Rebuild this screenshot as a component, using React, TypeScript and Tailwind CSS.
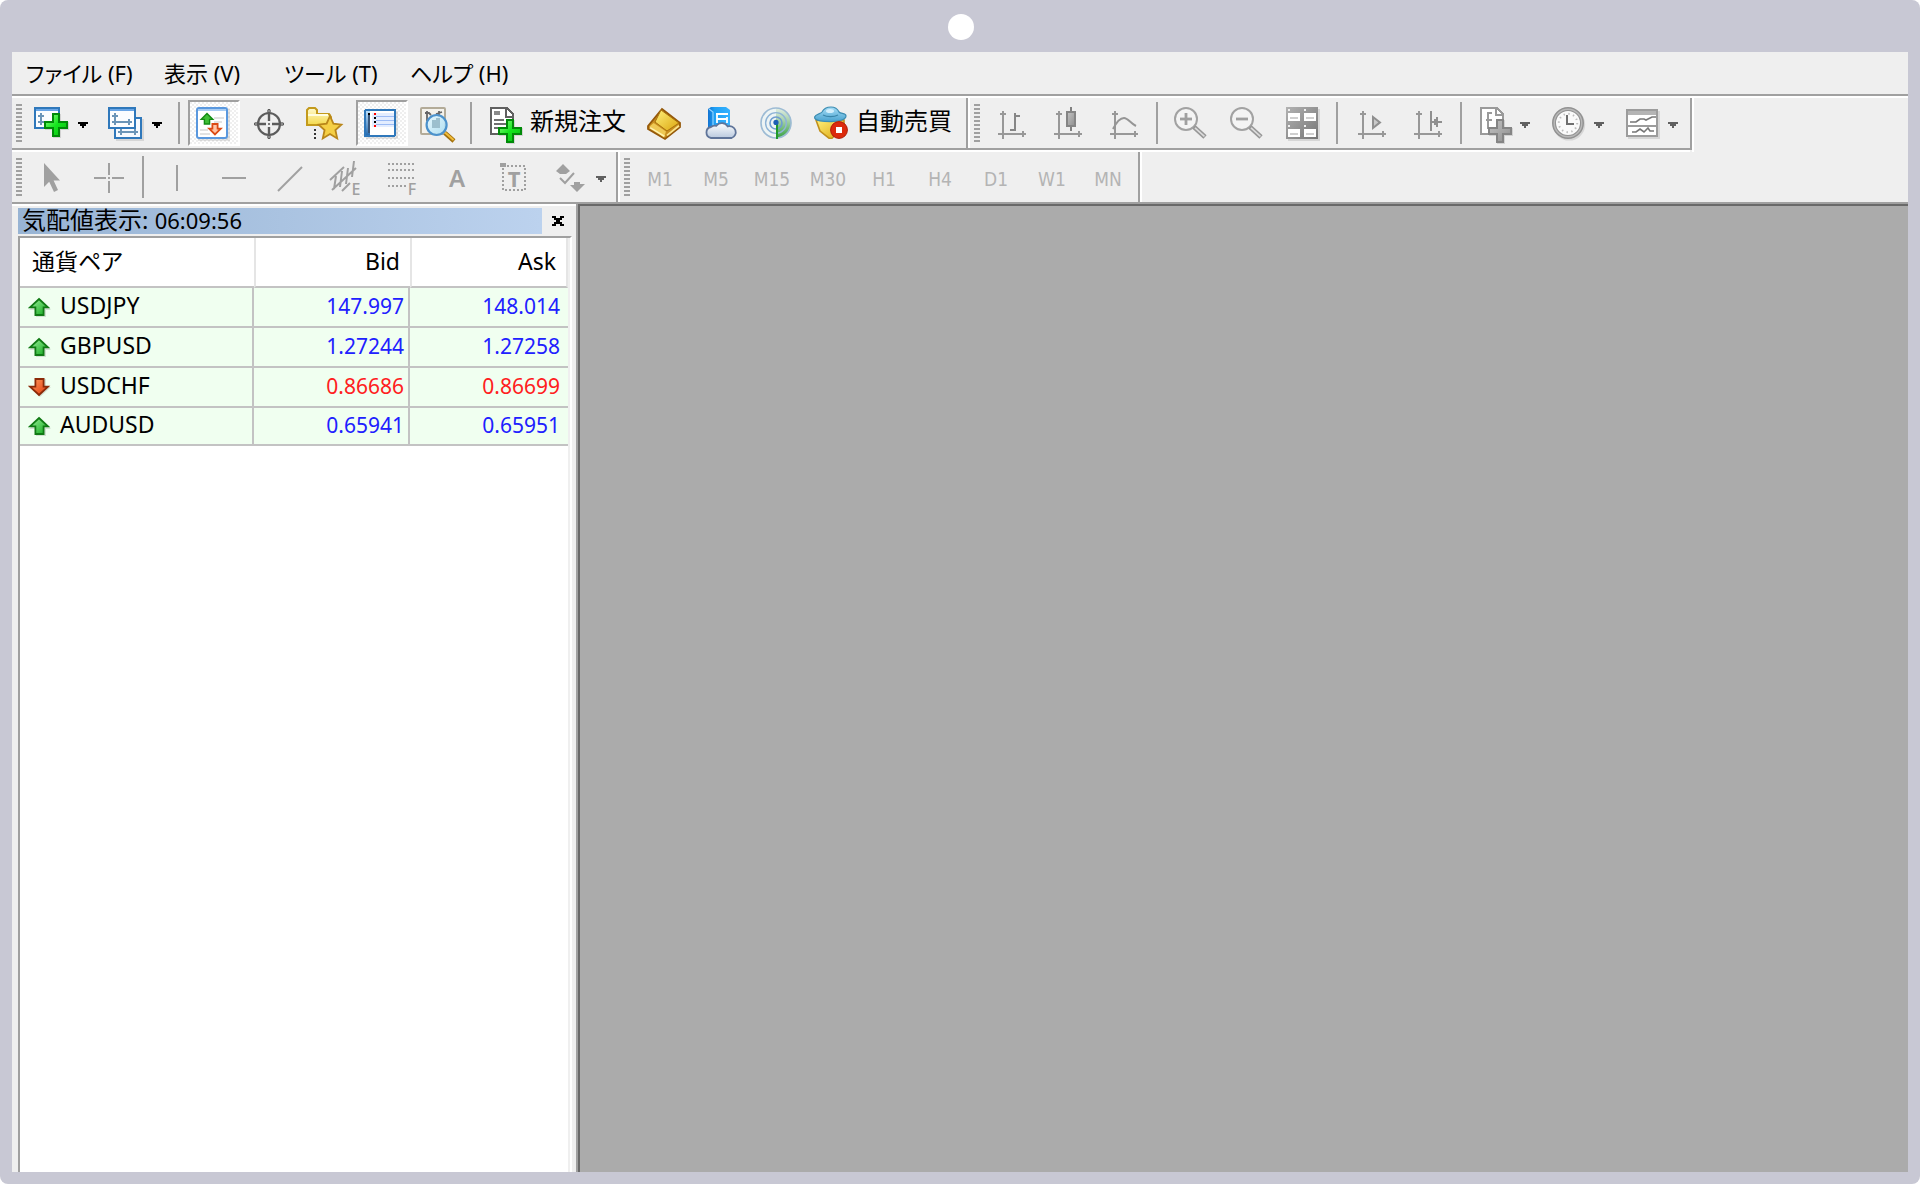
import React from 'react'
import { clsx } from 'clsx'

interface IconProps {
  children: React.ReactNode
  crisp?: boolean
}

// All toolbar glyphs share an 18x18 grid shown at double size
const Icon: React.FC<IconProps> = ({ children, crisp = true }) => (
  <svg
    viewBox="0 0 18 18"
    className="w-9 h-9 shrink-0 overflow-visible"
    shapeRendering={crisp ? 'crispEdges' : 'auto'}
    fill="none"
    aria-hidden="true"
  >
    {children}
  </svg>
)

const Gradients = () => (
  <svg className="absolute w-0 h-0" aria-hidden="true">
    <defs>
      <linearGradient id="plusGreen" x1="0" y1="0" x2="1" y2="1">
        <stop offset="0" stopColor="#9dff8c" />
        <stop offset="0.5" stopColor="#14e61e" />
        <stop offset="1" stopColor="#08b80e" />
      </linearGradient>
      <linearGradient id="plusGrey" x1="0" y1="0" x2="1" y2="1">
        <stop offset="0" stopColor="#c4c4c4" />
        <stop offset="1" stopColor="#8e8e8e" />
      </linearGradient>
      <linearGradient id="strip" x1="0" y1="0" x2="0" y2="1">
        <stop offset="0" stopColor="#b9dcf8" />
        <stop offset="1" stopColor="#2a6db0" />
      </linearGradient>
      <linearGradient id="gold" x1="0" y1="0" x2="1" y2="1">
        <stop offset="0" stopColor="#fff07a" />
        <stop offset="1" stopColor="#dba50e" />
      </linearGradient>
      <linearGradient id="folder" x1="0" y1="0" x2="0" y2="1">
        <stop offset="0" stopColor="#fffbd0" />
        <stop offset="1" stopColor="#f4d94c" />
      </linearGradient>
      <linearGradient id="lens" x1="0" y1="0" x2="1" y2="1">
        <stop offset="0" stopColor="#e6f8ff" />
        <stop offset="1" stopColor="#a6dcf2" />
      </linearGradient>
      <linearGradient id="page" x1="0" y1="0" x2="1" y2="0">
        <stop offset="0" stopColor="#1273d2" />
        <stop offset="0.3" stopColor="#1fa0f4" />
        <stop offset="1" stopColor="#37b2ff" />
      </linearGradient>
      <linearGradient id="cloud" x1="0" y1="0" x2="0" y2="1">
        <stop offset="0" stopColor="#ffffff" />
        <stop offset="1" stopColor="#b9c9de" />
      </linearGradient>
      <linearGradient id="radar" x1="0" y1="0" x2="0" y2="1">
        <stop offset="0" stopColor="#e2eee4" />
        <stop offset="0.4" stopColor="#a9d2ae" />
        <stop offset="1" stopColor="#36a23f" />
      </linearGradient>
      <linearGradient id="hat" x1="0" y1="0" x2="0" y2="1">
        <stop offset="0" stopColor="#a4dcf6" />
        <stop offset="1" stopColor="#4aa3cf" />
      </linearGradient>
      <linearGradient id="greyTile" x1="0" y1="0" x2="1" y2="1">
        <stop offset="0" stopColor="#b2b2b2" />
        <stop offset="1" stopColor="#767676" />
      </linearGradient>
      <linearGradient id="upArrow" x1="0" y1="0" x2="1" y2="1">
        <stop offset="0" stopColor="#9df09d" />
        <stop offset="1" stopColor="#0fa81a" />
      </linearGradient>
      <linearGradient id="downArrow" x1="0" y1="0" x2="1" y2="1">
        <stop offset="0" stopColor="#ff9a5e" />
        <stop offset="1" stopColor="#e03a0c" />
      </linearGradient>
    </defs>
  </svg>
)

const Plus: React.FC<{ x: number; y: number; stroke?: string; fill?: string }> = ({
  x,
  y,
  stroke = '#008a08',
  fill = 'url(#plusGreen)',
}) => (
  <>
    <path
      transform={`translate(${x + 0.5} ${y + 0.5})`}
      d="M4 0h4v4h4v4H8v4H4V8H0V4h4z"
      fill="#000"
      opacity="0.12"
    />
    <path
      transform={`translate(${x} ${y})`}
      d="M4.5.5h3v4h4v3h-4v4h-3v-4h-4v-3h4z"
      fill={fill}
      stroke={stroke}
    />
  </>
)

const NewChartIcon = () => (
  <Icon>
    <path d="M.5.5h12v10H.5z" fill="#fbfdff" stroke="#2f78bb" />
    <path d="M1 1h11v1H1z" fill="#6aa6e6" />
    <path d="M3 3h1v6H3zM2 4h3v1H2zM2 7h5v1H2z" fill="#6b95b8" />
    <Plus x={5} y={3} />
  </Icon>
)

const ProfilesIcon = () => (
  <Icon>
    <path d="M4 6h14v11H4z" fill="#000" opacity="0.1" />
    <path d="M3.5 5.5h13v10h-13z" fill="#f6faff" stroke="#2f78bb" />
    <path d="M5 12h10v1H5zM6 11h1v3H6zM13 11h1v3h-1z" fill="#6b95b8" />
    <path d="M.5.5h13v10H.5z" fill="#fbfdff" stroke="#2f78bb" />
    <path d="M1 1h12v1H1z" fill="#6aa6e6" />
    <path d="M3 3h1v6H3zM2 4h3v1H2zM2 7h10v1H2zM10 6h1v3h-1z" fill="#6b95b8" />
  </Icon>
)

const MarketWatchIcon = () => (
  <Icon crisp={false}>
    <path d="M1 1h16v16H1z" fill="#000" opacity="0.1" />
    <rect x="0.5" y="0.5" width="15" height="15" rx="1" fill="#fff" stroke="#5a98de" />
    <path d="M1 1h14v1H1z" fill="#a9cdf3" />
    <path d="M9 5.5h5M9 7.5h4M2 11.5h4M2 13.5h5" stroke="#e2e2e2" />
    <path d="M5.500 3.300l2.900 2.900H6.800v2.300H4.200V6.200H2.600z" fill="#3fbe36" stroke="#138c13" strokeWidth="0.700" />
    <path d="M9.500 13.700l2.900-2.900h-1.600V8.500H8.200v2.300H6.600z" fill="#ffc4a6" stroke="#dc4a14" strokeWidth="0.900" />
  </Icon>
)

const CrosshairIcon = () => (
  <Icon crisp={false}>
    <circle cx="8.500" cy="8.500" r="5.500" stroke="#5c5c5c" strokeWidth="1.100" />
    <path d="M8.500 1v6M8.500 10v6M1 8.500h6M10 8.500h6" stroke="#5c5c5c" strokeWidth="1.200" />
    <path d="M8 8h1v1H8z" fill="#777" />
    <path d="M7.500 2h2M7.500 15h2M2 7.500v2M15 7.500v2" stroke="#8a8a8a" />
  </Icon>
)

const NavigatorIcon = () => (
  <Icon crisp={false}>
    <path
      d="M-.5 1.500L.5.500h3l1 1v2h6l1 1.500v4h-12z"
      fill="url(#folder)"
      stroke="#c39a1c"
    />
    <path d="M0 4h10" stroke="#fffde0" />
    <path d="M3.500 11v6" stroke="#333" strokeDasharray="1 1" shapeRendering="crispEdges" />
    <path
      d="M11 4.500l1.700 3.800 4 .500-3 2.700.900 4.200-3.600-2.200-3.600 2.200.900-4.200-3-2.700 4-.500z"
      fill="#f5cf45"
      stroke="#b9861a"
      strokeWidth="0.900"
    />
  </Icon>
)

const DataWindowIcon = () => (
  <Icon>
    <path d="M1 2h16v14H1z" fill="#000" opacity="0.1" />
    <rect x="0.500" y="1.500" width="15" height="13" rx="0.500" fill="#fff" stroke="#2f78bb" />
    <path d="M1 2h2v12H1z" fill="url(#strip)" />
    <path d="M4 3h11v7H4z" fill="#e3edff" />
    <path d="M6 4.500h9M6 6.500h9M6 8.500h9" stroke="#9dbcf5" strokeWidth="0.500" />
    <path d="M2 3h1v1H2zM5 5h1v1H5zM5 7h1v1H5z" fill="#000" />
    <path d="M2 4h1v9H2z" fill="#37567c" />
    <path d="M5 3h1v1H5zM5 9h1v1H5z" fill="#f00" />
  </Icon>
)

const TesterIcon = () => (
  <Icon crisp={false}>
    <rect x="0.500" y="0.500" width="12" height="13" rx="0.500" fill="#f4f2ec" stroke="#b3ab98" />
    <path d="M3.500 2v5M2.500 3h2l1 1M9.500 2v3M8 3.500l3-1" stroke="#666" strokeWidth="0.900" />
    <circle cx="8.300" cy="9" r="5" fill="url(#lens)" fillOpacity="0.900" stroke="#4c92cc" strokeWidth="1.100" />
    <path d="M6 6.500h2v4H6zM8 5.500h2v5H8z" fill="#9cbfce" />
    <path d="M12.500 13l4.500 4" stroke="#a2700c" strokeWidth="2.200" />
    <path d="M12.500 12.700l4.300 3.800" stroke="#f2bd3a" strokeWidth="1" />
  </Icon>
)

const NewOrderIcon = () => (
  <Icon>
    <path d="M.5.500h8l3 3v10H.5z" fill="#fff" stroke="#606060" />
    <path d="M8 1v4h4" stroke="#606060" />
    <path d="M2 2h3v2H2z" fill="#8a8a8a" />
    <path d="M2 6.500h5M2 8.500h7M2 10.500h3" stroke="#707070" />
    <Plus x={4} y={6} />
  </Icon>
)

const BookIcon = () => (
  <Icon crisp={false}>
    <path d="M7 1l9 7v2L8.500 16 0 11V9.500z" fill="#c98f20" stroke="#95590a" strokeWidth="0.900" />
    <path d="M6.500 1.500L15.500 8 9.500 12 3.500 7.500z" fill="url(#gold)" stroke="#a8700c" strokeWidth="0.500" />
    <path d="M.800 9.800l2-1.800 6.200 4.200-1 3z" fill="#efc955" />
    <path d="M1 10.300l7.200 4.300" stroke="#fff3ae" strokeWidth="0.800" />
    <path d="M9.500 14.200l6-4.800" stroke="#fbe48c" strokeWidth="0.900" />
  </Icon>
)

const CloudIcon = () => (
  <Icon crisp={false}>
    <path d="M2 1l1.500-1H11l2 1.500V10H2z" fill="url(#page)" />
    <path d="M2.500 1l2 1.500V9" stroke="#8fd2ff" strokeWidth="0.600" />
    <path d="M6 3.500h6M6.500 3.500V8M6.500 6h5M11.500 5v3" stroke="#fff" strokeWidth="0.900" />
    <path
      d="M3.500 15.500a2.800 2.800 0 010-5.500 3 3 0 012.700-.600 3.400 3.400 0 015.600.300 2.900 2.900 0 012 5.800z"
      fill="url(#cloud)"
      stroke="#5f7499"
      strokeWidth="0.900"
    />
  </Icon>
)

const SignalsIcon = () => (
  <Icon crisp={false}>
    <circle cx="8" cy="8" r="7.600" fill="#edf4f4" />
    <path d="M8 8V.400A7.600 7.600 0 018 15.600z" fill="url(#radar)" />
    <circle cx="8" cy="8" r="7.500" stroke="#9dbbd4" strokeWidth="0.800" />
    <circle cx="8" cy="8" r="5.200" stroke="#8fb4d6" strokeWidth="0.700" />
    <circle cx="8" cy="8" r="3" stroke="#6f9dd0" strokeWidth="0.800" />
    <path d="M8 8h1v8H8z" fill="#1f9a2b" />
    <circle cx="8" cy="7.700" r="1.300" fill="#1d5fb4" />
  </Icon>
)

const AutoTradingIcon = () => (
  <Icon crisp={false}>
    <path d="M0 6.500h14v3L8 15.600H6.500L2 12z" fill="url(#gold)" stroke="#c1901c" strokeWidth="0.800" />
    <path
      d="M-.700 5c.500-1.500 3-1.500 3.700-2.500C4 .500 5.500 0 7.500 0s3.300 1 4 2.500c1 1 3.500.500 3.500 2 0 2-4 2.800-7.500 2.800S-1 7-.700 5z"
      fill="url(#hat)"
      stroke="#3d8db2"
      strokeWidth="0.600"
    />
    <path d="M3.500 4c2 1.100 5.500 1.100 7.500 0" stroke="#3a86ab" strokeWidth="0.600" />
    <ellipse cx="7" cy="2" rx="2" ry="1" fill="#d2effc" />
    <circle cx="11.500" cy="11.500" r="4.200" fill="#dc2a0c" stroke="#b01c06" strokeWidth="0.500" />
    <path d="M10 10h3v3h-3z" fill="#fff" />
  </Icon>
)

const Axes = () => (
  <path
    d="M5 2h1v14H5zM4 3h3v1H4zM3 13h14v1H3zM15 12h1v3h-1z"
    fill="#989898"
  />
)

const BarChartIcon = () => (
  <Icon>
    <Axes />
    <path d="M11 3h1v9h-1zM12 4h2v1h-2zM9 11h2v1H9z" fill="#868686" />
  </Icon>
)

const CandleIcon = () => (
  <Icon>
    <Axes />
    <path d="M11 0h1v12h-1z" fill="#808080" />
    <path d="M9.500 2.500h4v7h-4z" fill="url(#plusGrey)" stroke="#858585" />
  </Icon>
)

const LineChartIcon = () => (
  <Icon>
    <Axes />
    <path d="M4.500 11C6 8 8 5.500 10 5.500S13 8 16 9.500" stroke="#959595" shapeRendering="auto" />
  </Icon>
)

const ZoomIcon: React.FC<{ zoomIn?: boolean }> = ({ zoomIn }) => (
  <Icon crisp={false}>
    <circle cx="6" cy="6" r="5.500" fill="#f4f4f4" stroke="#a2a2a2" />
    <path d="M3 6h6" stroke="#a0a0a0" strokeWidth="1.400" />
    {zoomIn && <path d="M6 3v6" stroke="#a0a0a0" strokeWidth="1.400" />}
    <path d="M10 10l5.500 5" stroke="#979797" strokeWidth="2.400" />
    <path d="M10.500 10.400l4.700 4.300" stroke="#dcdcdc" strokeWidth="0.800" />
  </Icon>
)

const TileIcon = () => (
  <Icon>
    <path d="M1 1h16v16H1z" fill="#000" opacity="0.1" />
    <path d="M0 0h8v8H0zM8 0h8v8H8zM0 8h8v8H0zM8 8h8v8H8z" fill="url(#greyTile)" />
    <path d="M1 3h6v4H1zM9 3h6v4H9zM1 11h6v4H1zM9 11h6v4H9z" fill="#fff" />
    <path d="M2 5h4v1H2zM10 5h4v1h-4zM2 13h4v1H2zM10 13h4v1h-4z" fill="#cfcfcf" />
    <path d="M1 1h1v1H1zM9 1h1v1H9zM1 9h1v1H1zM9 9h1v1H9z" fill="#f0f0f0" />
  </Icon>
)

const AutoScrollIcon = () => (
  <Icon>
    <Axes />
    <path d="M10.500 5v5.500L14 7.700z" fill="#c9c9c9" stroke="#8f8f8f" shapeRendering="auto" />
  </Icon>
)

const ChartShiftIcon = () => (
  <Icon>
    <Axes />
    <path d="M11 2h1v10h-1zM12 7h5v1h-5zM13 6h1v3h-1zM14 5h1v5h-1z" fill="#8f8f8f" />
  </Icon>
)

const IndicatorsIcon = () => (
  <Icon>
    <path d="M2.500.500h8l3 3v10h-11z" fill="#fff" stroke="#9a9a9a" />
    <path d="M10 1v3h3" stroke="#9a9a9a" />
    <path d="M8 3H6v8M5 6.500h3" stroke="#9a9a9a" />
    <Plus x={6} y={6} stroke="#858585" fill="url(#plusGrey)" />
  </Icon>
)

const ClockIcon = () => (
  <Icon crisp={false}>
    <circle cx="9.600" cy="8.800" r="8" fill="#000" opacity="0.1" />
    <circle cx="9" cy="8" r="7" fill="#fafafa" stroke="#929292" strokeWidth="2" />
    <circle cx="9" cy="8" r="6.900" stroke="#b9b9b9" strokeWidth="0.700" />
    <circle cx="9" cy="8" r="4.600" stroke="#bdbdbd" strokeWidth="1" strokeDasharray="0.700 1.710" />
    <path d="M8.500 4v4.500H12" stroke="#6f6f6f" strokeWidth="1" />
  </Icon>
)

const TemplateIcon = () => (
  <Icon>
    <path d="M2 2h16v14H2z" fill="#000" opacity="0.1" />
    <path d="M1.500 1.500h15v13h-15z" fill="#fff" stroke="#9c9c9c" />
    <path d="M2 2h14v2H2z" fill="#b4b4b4" />
    <path d="M2 9.500h14" stroke="#9c9c9c" />
    <path
      d="M3 7.500h3l2-1.500h2l1 .500 3-1.500h2M4 12.500h2l2-1.500 2 1.500 2-2 1 1.500h2"
      stroke="#777"
      strokeWidth="0.800"
      shapeRendering="auto"
    />
  </Icon>
)

const CursorIcon = () => (
  <Icon crisp={false}>
    <path d="M5 1v12l2.600-2.600L10 15.500l2-1-2.200-4.700H13z" fill="#a0a0a0" />
  </Icon>
)

const CrossIcon = () => (
  <Icon>
    <path d="M9 1h1v6H9zM9 10h1v6H9zM2 8h6v1H2zM11 8h6v1h-6zM9 8h1v1H9z" fill="#a0a0a0" />
  </Icon>
)

const VLineIcon = () => (
  <Icon>
    <path d="M8 2h1v13H8z" fill="#a0a0a0" />
  </Icon>
)

const HLineIcon = () => (
  <Icon>
    <path d="M3 8h12v1H3z" fill="#a0a0a0" />
  </Icon>
)

const TrendIcon = () => (
  <Icon crisp={false}>
    <path d="M3 15L15 3" stroke="#a0a0a0" />
  </Icon>
)

const SmallLetter: React.FC<{ x: number; y: number; size: number; weight: number; children: string }> = ({
  x,
  y,
  size,
  weight,
  children,
}) => (
  <text
    x={x}
    y={y}
    fontSize={size}
    fontWeight={weight}
    fontFamily="'Noto Sans', sans-serif"
    textAnchor="middle"
    fill="#a0a0a0"
  >
    {children}
  </text>
)

const ChannelIcon = () => (
  <Icon crisp={false}>
    <path
      d="M1 9.500L8 3M2 14.500L14 3.500M7 15l4-4M4 7.500l-1 6.500M7 5l-1 8M10 3.500l-1 8M13 0l-1 8"
      stroke="#a0a0a0"
    />
    <SmallLetter x={14} y={17} size={8} weight={500}>E</SmallLetter>
  </Icon>
)

const FiboIcon = () => (
  <Icon>
    <path
      d="M2 1.500h13M2 4.500h13M2 8.500h13M2 12.500h9"
      stroke="#a0a0a0"
      strokeDasharray="1 1"
    />
    <SmallLetter x={14} y={17} size={8} weight={500}>F</SmallLetter>
  </Icon>
)

const TextIcon = () => (
  <Icon>
    <SmallLetter x={8.5} y={13} size={12} weight={600}>A</SmallLetter>
  </Icon>
)

const LabelIcon = () => (
  <Icon>
    <path d="M3.500 2.500h11v12h-11z" stroke="#a0a0a0" strokeDasharray="1 1" />
    <path d="M2 1h3v2H2z" fill="#a0a0a0" />
    <SmallLetter x={9} y={13} size={11} weight={700}>T</SmallLetter>
  </Icon>
)

const ShapesIcon = () => (
  <Icon crisp={false}>
    <path d="M5.500 1.500L9 5 7 6.500H4L2 5zM11 10.500h3v1h2.500L12.500 15.500 9 12h2z" fill="#a0a0a0" />
    <path d="M4 8.500L6.500 11 11 6" stroke="#a0a0a0" />
  </Icon>
)

const Caret: React.FC<{ muted?: boolean }> = ({ muted }) => (
  <svg viewBox="0 0 5 3" className="w-2.5 h-1.5 shrink-0" shapeRendering="crispEdges" aria-hidden="true">
    <path d="M0 0h5v1H0zM1 1h3v1H1zM2 2h1v1H2z" fill={muted ? '#606060' : '#000'} />
  </svg>
)

interface ToolButtonProps {
  label: string
  icon: React.ReactNode
  text?: string
  pressed?: boolean
  dropdown?: boolean
  muted?: boolean
}

const ToolButton: React.FC<ToolButtonProps> = ({ label, icon, text, pressed, dropdown, muted }) => (
  <button
    type="button"
    aria-label={label}
    aria-pressed={pressed}
    className={clsx(
      'flex items-center shrink-0 h-[46px] border-2 mr-1 px-1.5 pt-1',
      pressed
        ? 'border-t-[#a0a0a0] border-l-[#a0a0a0] border-r-white border-b-white bg-[repeating-conic-gradient(#ffffff_0_25%,#efefef_0_50%)] bg-[length:4px_4px]'
        : 'border-transparent'
    )}
  >
    {icon}
    {text && <span className="ml-1 text-2xl leading-6 whitespace-nowrap pb-2 pr-0.5">{text}</span>}
    {dropdown && (
      <span className="ml-2">
        <Caret muted={muted} />
      </span>
    )}
  </button>
)

const Grip = () => (
  <div className="w-1.5 h-[38px] ml-1 mr-1 shrink-0 bg-[repeating-linear-gradient(to_bottom,#a0a0a0_0_2px,transparent_2px_4px)]" />
)

const Separator: React.FC<{ className?: string }> = ({ className = 'ml-1 mr-2' }) => (
  <div className={clsx('w-0.5 h-[42px] shrink-0 bg-[#a0a0a0]', className)} />
)

// Raised edge that closes a group of tools
const GroupEdge: React.FC<{ className?: string }> = ({ className }) => (
  <div className={clsx('flex self-stretch shrink-0', className)}>
    <div className="w-0.5 bg-[#a0a0a0]" />
    <div className="w-0.5 bg-white" />
  </div>
)

const menus = ['ファイル (F)', '表示 (V)', 'ツール (T)', 'ヘルプ (H)']

const timeframes = ['M1', 'M5', 'M15', 'M30', 'H1', 'H4', 'D1', 'W1', 'MN']

interface Quote {
  symbol: string
  bid: string
  ask: string
  up: boolean
}

const quotes: Quote[] = [
  { symbol: 'USDJPY', bid: '147.997', ask: '148.014', up: true },
  { symbol: 'GBPUSD', bid: '1.27244', ask: '1.27258', up: true },
  { symbol: 'USDCHF', bid: '0.86686', ask: '0.86699', up: false },
  { symbol: 'AUDUSD', bid: '0.65941', ask: '0.65951', up: true },
]

const Direction: React.FC<{ up: boolean }> = ({ up }) => (
  <svg viewBox="0 0 12 10" className="w-6 h-5 shrink-0" role="img" aria-label={up ? 'Up' : 'Down'}>
    {up ? (
      <>
        <path d="M6 1l5.500 5.500H9V10H4V6.500H.500z" fill="#000" opacity="0.12" />
        <path d="M5.500 1l4.500 4.200H7.800V9H3.700V5.200H1z" fill="url(#upArrow)" stroke="#107a14" strokeWidth="0.900" />
      </>
    ) : (
      <>
        <path d="M6 10l5.500-5H9V1H4v4H.500z" fill="#000" opacity="0.12" />
        <path d="M5.500 9l4.500-4.200H7.800V1H3.700v3.800H1z" fill="url(#downArrow)" stroke="#8c2a08" strokeWidth="0.900" />
      </>
    )}
  </svg>
)

const MenuBar = () => (
  <nav className="grid grid-cols-[138px_120px_126px_auto] h-[42px] items-center pl-3.5 text-[22px] leading-8">
    {menus.map((menu) => (
      <button key={menu} type="button" className="whitespace-nowrap text-left">
        {menu}
      </button>
    ))}
  </nav>
)

const MainToolbar = () => (
  <div className="flex">
    <div className="flex items-center h-[54px] border-b-2 border-white">
      <div className="flex items-center h-[52px] border-b-2 border-[#a0a0a0]">
        <Grip />
        <ToolButton label="新規チャート" icon={<NewChartIcon />} dropdown />
        <ToolButton label="プロファイル" icon={<ProfilesIcon />} dropdown />
        <Separator />
        <ToolButton label="気配値表示" icon={<MarketWatchIcon />} pressed />
        <ToolButton label="データウィンドウ" icon={<CrosshairIcon />} />
        <ToolButton label="お気に入り" icon={<NavigatorIcon />} />
        <ToolButton label="ナビゲーター" icon={<DataWindowIcon />} pressed />
        <ToolButton label="ストラテジーテスター" icon={<TesterIcon />} />
        <Separator className="ml-0.5 mr-2.5" />
        <ToolButton label="新規注文" icon={<NewOrderIcon />} text="新規注文" />
        <ToolButton label="メタエディター" icon={<BookIcon />} />
        <ToolButton label="クラウド" icon={<CloudIcon />} />
        <ToolButton label="シグナル" icon={<SignalsIcon />} />
        <ToolButton label="自動売買" icon={<AutoTradingIcon />} text="自動売買" />
        <GroupEdge />
        <Grip />
        <ToolButton label="バーチャート" icon={<BarChartIcon />} />
        <ToolButton label="ローソク足" icon={<CandleIcon />} />
        <ToolButton label="ラインチャート" icon={<LineChartIcon />} />
        <Separator />
        <ToolButton label="拡大" icon={<ZoomIcon zoomIn />} />
        <ToolButton label="縮小" icon={<ZoomIcon />} />
        <ToolButton label="整列" icon={<TileIcon />} />
        <Separator className="ml-0.5 mr-1.5" />
        <ToolButton label="自動スクロール" icon={<AutoScrollIcon />} />
        <ToolButton label="チャートシフト" icon={<ChartShiftIcon />} />
        <Separator className="ml-1 mr-1.5" />
        <ToolButton label="インディケータ" icon={<IndicatorsIcon />} dropdown muted />
        <ToolButton label="時間足設定" icon={<ClockIcon />} dropdown muted />
        <ToolButton label="定型チャート" icon={<TemplateIcon />} dropdown muted />
      </div>
    </div>
    <div className="w-0.5 h-[52px] bg-[#a0a0a0]" />
    <div className="w-0.5 h-[54px] bg-white" />
  </div>
)

const DrawingToolbar = () => (
  <div className="flex items-center h-[50px]">
    <Grip />
    <ToolButton label="カーソル" icon={<CursorIcon />} />
    <ToolButton label="クロスヘア" icon={<CrossIcon />} />
    <Separator />
    <ToolButton label="垂直線" icon={<VLineIcon />} />
    <ToolButton label="水平線" icon={<HLineIcon />} />
    <ToolButton label="トレンドライン" icon={<TrendIcon />} />
    <ToolButton label="チャネル" icon={<ChannelIcon />} />
    <ToolButton label="フィボナッチ" icon={<FiboIcon />} />
    <ToolButton label="テキスト" icon={<TextIcon />} />
    <ToolButton label="ラベル" icon={<LabelIcon />} />
    <ToolButton label="図形" icon={<ShapesIcon />} dropdown muted />
    <GroupEdge className="-ml-0.5" />
    <Grip />
    {timeframes.map((tf) => (
      <button
        key={tf}
        type="button"
        className="w-[52px] h-[46px] mr-1 pt-1 shrink-0 text-center text-[19px] text-[#b4b4b4] font-['DejaVu_Sans_Condensed','DejaVu_Sans',sans-serif]"
      >
        {tf}
      </button>
    ))}
    <GroupEdge />
  </div>
)

const MarketWatch = () => (
  <aside className="flex flex-col w-[564px] shrink-0 border-t-2 border-white pt-0.5 pl-1.5">
    <div className="flex h-[26px] items-center">
      <h2 className="flex-1 h-full pl-1 text-2xl leading-6 whitespace-nowrap bg-linear-to-r from-[#98b4d4] to-[#bcd2ee]">
        気配値表示: <span className="text-[22px]">06:09:56</span>
      </h2>
      <button type="button" aria-label="閉じる" className="w-[34px] pr-0.5 flex justify-center">
        <svg viewBox="0 0 6 5" className="w-3 h-2.5" shapeRendering="crispEdges" aria-hidden="true">
          <path d="M0 0h2v1H0zM4 0h2v1H4zM1 1h4v1H1zM2 2h2v1H2zM1 3h4v1H1zM0 4h2v1H0zM4 4h2v1H4z" />
        </svg>
      </button>
    </div>
    <div className="flex-1 mt-0.5 mr-1 border-t-2 border-l-2 border-[#a0a0a0] border-r-2 border-r-white bg-white">
      <div className="h-full border-r-2 border-[#efefef]">
        <table className="w-full table-fixed border-separate border-spacing-0">
          <colgroup>
            <col className="w-[234px]" />
            <col className="w-[156px]" />
            <col />
          </colgroup>
          <thead>
            <tr className="h-[50px] text-[23px] leading-8">
              <th className="border-b-2 border-[#c3c3c3] pl-3 pb-0.5 text-left font-normal">通貨ペア</th>
              <th className="border-b-2 border-l-2 border-b-[#c3c3c3] border-l-[#e5e5e5] pr-2.5 pb-0.5 text-right font-normal">
                Bid
              </th>
              <th className="border-b-2 border-x-2 border-b-[#c3c3c3] border-x-[#e5e5e5] pr-2.5 pb-0.5 text-right font-normal">
                Ask
              </th>
            </tr>
          </thead>
          <tbody className="bg-[#f0fff0]">
            {quotes.map(({ symbol, bid, ask, up }) => (
              <tr
                key={symbol}
                className={clsx('h-10 last:h-[38px]', up ? 'text-[#2020ff]' : 'text-[#ff2020]')}
              >
                <td className="border-b-2 border-r-2 border-[#c3c3c3] pl-2">
                  <div className="flex items-center gap-2 text-[23px] leading-8 text-black">
                    <Direction up={up} />
                    <span className="pb-1">{symbol}</span>
                  </div>
                </td>
                <td className="border-b-2 border-r-2 border-[#c3c3c3] pr-1 pb-0.5 text-right text-[21px] leading-8">
                  {bid}
                </td>
                <td className="border-b-2 border-[#c3c3c3] pr-2 pb-0.5 text-right text-[21px] leading-8">{ask}</td>
              </tr>
            ))}
          </tbody>
        </table>
      </div>
    </div>
  </aside>
)

export default function App() {
  return (
    <div className="min-h-screen bg-white">
      <Gradients />
      <div className="flex flex-col min-h-screen px-3 pb-3 rounded-lg bg-[#c8c8d4] text-black font-['Noto_Sans','Noto_Sans_CJK_JP',sans-serif] [font-feature-settings:'palt']">
        <div className="flex h-[52px] items-center justify-center pt-0.5 pl-0.5">
          <div className="w-[26px] h-[26px] rounded-full bg-white" />
        </div>
        <main className="flex flex-col flex-1 overflow-hidden bg-[#efefef]">
          <MenuBar />
          <div className="h-1 border-t-2 border-[#a0a0a0] border-b-2 border-b-white" />
          <MainToolbar />
          <DrawingToolbar />
          <div className="flex flex-1 border-t-2 border-[#a0a0a0]">
            <MarketWatch />
            <section aria-label="チャート" className="flex-1 border-l-2 border-[#a0a0a0]">
              <div className="h-full border-t-2 border-l-2 border-[#696969] bg-[#ababab]" />
            </section>
          </div>
        </main>
      </div>
    </div>
  )
}
